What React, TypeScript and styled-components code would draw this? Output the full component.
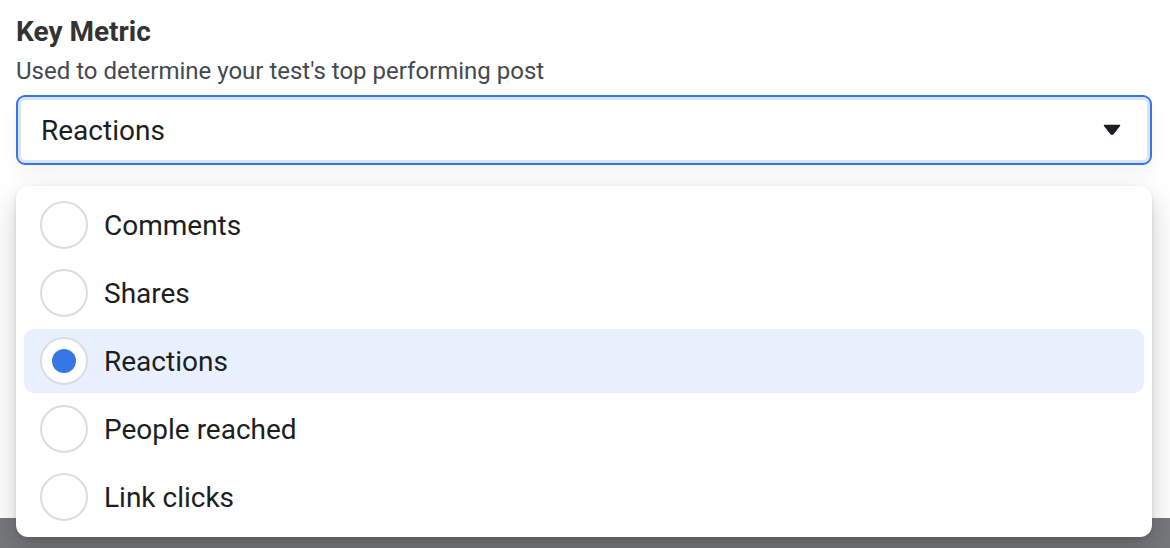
import styled, { createGlobalStyle } from "styled-components";

const GlobalStyle = createGlobalStyle`
  html, body {
    margin: 0;
    padding: 0;
    background: #ffffff;
  }
  body {
    font-family: Roboto, "Liberation Sans", Arial, sans-serif;
    color: #1c1e21;
    -webkit-font-smoothing: antialiased;
  }
`;

const options = ["Comments", "Shares", "Reactions", "People reached", "Link clicks"];
const selected = "Reactions";

const Page = styled.div`
  position: relative;
  width: 1170px;
  height: 548px;
  overflow: hidden;
  display: flex;
  flex-direction: column;
`;

const Panel = styled.div`
  background: #ffffff;
  height: 518px;
  padding: 16px 18px 0 16px;
  box-sizing: border-box;
`;

const Backdrop = styled.div`
  flex: 1;
  background: #777879;
`;

const Label = styled.div`
  font-size: 28px;
  font-weight: 700;
  color: #333;
  line-height: 32px;
`;

const Hint = styled.div`
  font-size: 24px;
  color: #444950;
  line-height: 30px;
  margin-top: 8px;
`;

const Select = styled.div`
  margin-top: 9px;
  height: 70px;
  box-sizing: border-box;
  border: 2px solid #3578e5;
  border-radius: 9px;
  box-shadow: inset 0 0 0 3px #d8e4fa, 0 8px 20px rgba(0, 0, 0, 0.05);
  display: flex;
  align-items: center;
  justify-content: space-between;
  padding: 0 29px 0 23px;
  font-size: 28px;
  color: #1c1e21;
  background: #fff;
`;

const Menu = styled.div`
  position: absolute;
  left: 16px;
  top: 186px;
  width: 1136px;
  box-sizing: border-box;
  background: #ffffff;
  border-radius: 12px;
  padding: 7px 8px 8px;
  display: flex;
  flex-direction: column;
  gap: 4px;
  box-shadow: 0 12px 28px rgba(0, 0, 0, 0.2), 0 2px 4px rgba(0, 0, 0, 0.1);
`;

const Option = styled.div<{ $active?: boolean }>`
  height: 64px;
  display: flex;
  align-items: center;
  gap: 16px;
  padding-left: 16px;
  border-radius: 10px;
  background: ${(p) => (p.$active ? "#e9f0fd" : "transparent")};
  font-size: 28px;
  color: #1c1e21;
`;

const Radio = styled.span<{ $checked?: boolean }>`
  width: 48px;
  height: 48px;
  box-sizing: border-box;
  border: 2px solid #dadde1;
  border-radius: 50%;
  background: #fff;
  display: flex;
  align-items: center;
  justify-content: center;
  flex-shrink: 0;

  &::after {
    content: "";
    width: 24px;
    height: 24px;
    border-radius: 50%;
    background: #3578e5;
    display: ${(p) => (p.$checked ? "block" : "none")};
  }
`;

function Caret() {
  return (
    <svg width="18" height="12" viewBox="0 0 18 12">
      <path d="M1.5 1.5 H16.5 L10.2 9.6 Q9 11 7.8 9.6 Z" fill="#1c1e21" stroke="#1c1e21" strokeWidth="1.5" strokeLinejoin="round" />
    </svg>
  );
}

export default function App() {
  return (
    <>
      <GlobalStyle />
      <Page>
        <Panel>
          <Label>Key Metric</Label>
          <Hint>Used to determine your test's top performing post</Hint>
          <Select>
            <span>{selected}</span>
            <Caret />
          </Select>
        </Panel>
        <Backdrop />
        <Menu>
          {options.map((o) => (
            <Option key={o} $active={o === selected}>
              <Radio $checked={o === selected} />
              {o}
            </Option>
          ))}
        </Menu>
      </Page>
    </>
  );
}
